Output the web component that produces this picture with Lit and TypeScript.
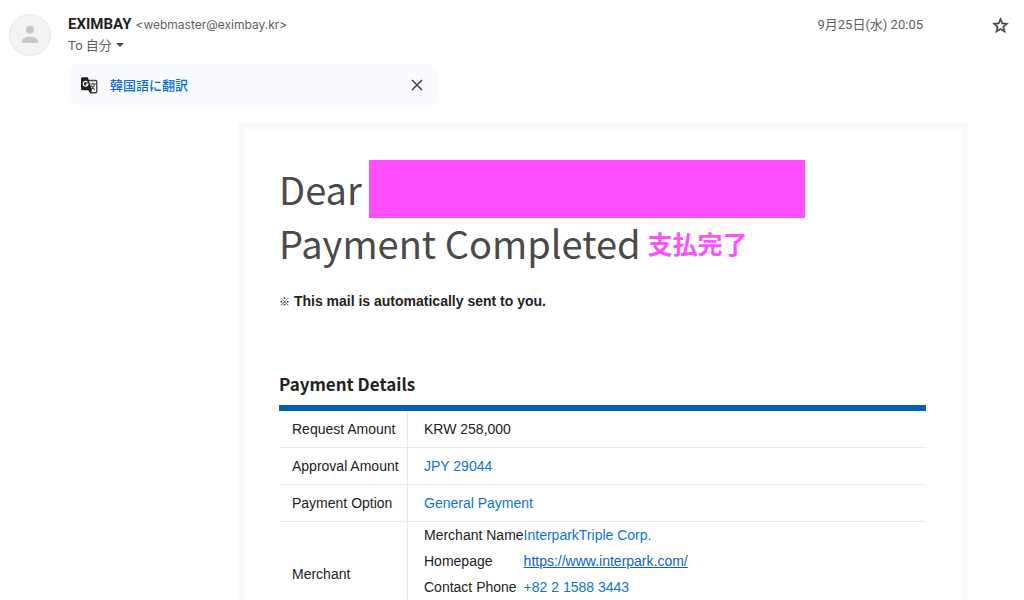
import { LitElement, html, css, svg } from "lit";
import { customElement } from "lit/decorators.js";

interface DetailRow {
  label: string;
  value: string;
  plain?: boolean;
}

const rows: DetailRow[] = [
  { label: "Request Amount", value: "KRW 258,000", plain: true },
  { label: "Approval Amount", value: "JPY 29044" },
  { label: "Payment Option", value: "General Payment" },
];

const translateIcon = svg`
  <path fill="#fff" stroke="#3c4043" stroke-width="1.6" d="M9 5.5h10a1.5 1.5 0 0 1 1.5 1.5v12a1.5 1.5 0 0 1-1.500 1.500H13z"/>
  <path fill="#1f1f1f" d="M3.200 1.500H9.600L14.800 17.500H3.200A2 2 0 0 1 1.200 15.500V3.500A2 2 0 0 1 3.200 1.500z"/>
  <path fill="#1f1f1f" d="M9.800 17.500h5L12.600 21z"/>
  <path fill="none" stroke="#fff" stroke-width="1.500" d="M9.100 7.700A2.900 2.900 0 1 0 9.700 10H7"/>
  <path fill="none" stroke="#3c4043" stroke-width="1.300" d="M12.600 9.700h6.800M15.800 8v1.700M18.200 9.700c-.4 2.300-1.900 4.100-4.200 5.600M13.800 11.500c1 2 2.500 3.800 4.600 5.300"/>`;

@customElement("app-root")
export class AppRoot extends LitElement {
  static styles = css`
    :host {
      display: block;
      height: 100vh;
      overflow: hidden;
      background: #fff;
      color: #222;
      font-family: "Liberation Sans", Arial, "Noto Sans CJK JP", sans-serif;
      font-size: 14px;
    }
    .head {
      display: flex;
      align-items: flex-start;
      padding: 14px 14px 0 9px;
      font-family: Roboto, "Noto Sans CJK JP", sans-serif;
      color: #5e5e5e;
    }
    .avatar {
      width: 42px;
      height: 42px;
      margin-right: 17px;
      flex: none;
    }
    .who {
      flex: 1;
      min-width: 0;
    }
    .line {
      display: flex;
      align-items: center;
      height: 20px;
      white-space: nowrap;
    }
    .name {
      margin: 0 4px 0 0;
      font-size: 15px;
      font-weight: 700;
      color: #1f1f1f;
    }
    .address {
      font-family: Inter, sans-serif;
      font-size: 12px;
    }
    button {
      display: flex;
      align-items: center;
      padding: 0;
      border: 0;
      background: none;
      font: inherit;
      color: inherit;
      cursor: pointer;
    }
    .to {
      gap: 4px;
      height: 20px;
      font-size: 13px;
    }
    .date {
      font-size: 13px;
      line-height: 22px;
      margin-right: 68px;
    }
    .star {
      margin-top: 2px;
    }
    .translate {
      display: flex;
      align-items: center;
      box-sizing: border-box;
      max-width: 370px;
      height: 41px;
      margin: 8px 0 0 68px;
      padding: 0 12px;
      border-radius: 8px;
      background: #f8fafe;
      font-family: "Noto Sans CJK JP", sans-serif;
    }
    .translate a {
      flex: 1;
      margin-left: 12px;
      color: #0b6bd8;
      font-size: 13px;
      line-height: 18px;
      font-weight: 500;
      text-decoration: none;
    }
    .card {
      margin: 18px 56px 0 238px;
      padding: 30px 36px 36px 35px;
      border: 6px solid #f9f9f9;
    }
    h1 {
      margin: 0;
      font-family: "Noto Sans CJK JP", sans-serif;
      font-size: 38px;
      font-weight: 400;
      line-height: 48px;
      color: #4a4a4a;
    }
    .row {
      display: flex;
      align-items: center;
      height: 48px;
      white-space: nowrap;
    }
    .row:first-child {
      height: 60px;
    }
    .mask {
      width: 436px;
      height: 58px;
      margin: 0 0 0 7px;
      background: #ff4fff;
    }
    .note {
      margin-left: 7px;
      font-size: 25px;
      font-weight: 700;
      color: #ff4fff;
    }
    .auto {
      margin: 24px 0 0;
      line-height: 20px;
      font-weight: 700;
    }
    .mark {
      font-family: "Noto Sans CJK JP", sans-serif;
      font-size: 11px;
    }
    h2 {
      margin: 60px 0 0;
      font-family: "Noto Sans CJK JP", sans-serif;
      font-size: 17px;
      font-weight: 700;
      line-height: 26px;
      color: #222;
    }
    table {
      border-collapse: collapse;
    }
    .details {
      width: 100%;
      margin-top: 8px;
      border-top: 6px solid #0061b0;
    }
    .details > tbody > tr {
      border-bottom: 1px solid #e9e9e9;
    }
    .label {
      width: 115px;
      height: 36px;
      padding: 0 0 0 13px;
      border-right: 1px solid #e9e9e9;
      font-weight: 400;
      text-align: left;
      white-space: nowrap;
    }
    .value {
      padding: 0 0 0 16px;
      color: #0a74da;
    }
    .plain {
      color: #222;
    }
    .merchant {
      padding-bottom: 26px;
    }
    .merchant th {
      width: 96px;
      padding: 0;
      color: #222;
      font-weight: 400;
      text-align: left;
      white-space: nowrap;
    }
    .merchant td {
      padding: 0;
      height: 26px;
    }
    .merchant a {
      color: #0b5fd0;
    }
  `;

  render() {
    return html`
      <header class="head">
        <svg class="avatar" viewBox="0 0 42 42" aria-hidden="true">
          <circle cx="21" cy="21" r="20.500" fill="#f3f3f3" stroke="#e6e6e6" />
          <circle cx="21" cy="15.800" r="4" fill="#c8c8c8" />
          <path fill="#c8c8c8" d="M13 29v-2c0-3 5-4.500 8-4.500s8 1.500 8 4.500v2z" />
        </svg>
        <div class="who">
          <div class="line">
            <h3 class="name">EXIMBAY</h3>
            <span class="address">&lt;webmaster@eximbay.kr&gt;</span>
          </div>
          <button class="to">
            To 自分
            <svg width="8" height="6" viewBox="0 0 8 6" aria-hidden="true"><path fill="#444" d="M0 2h8L4 6z" /></svg>
          </button>
        </div>
        <time class="date">9月25日(水) 20:05</time>
        <button class="star" aria-label="Star">
          <svg width="19" height="19" viewBox="0 0 24 24">
            <path fill="#444746" stroke="#444746" stroke-width=".6" d="M22 9.240l-7.190-.62L12 2 9.190 8.630 2 9.240l5.460 4.730L5.820 21 12 17.270 18.180 21l-1.630-7.030L22 9.240zM12 15.400l-3.760 2.270 1-4.280-3.320-2.880 4.380-.38L12 6.100l1.710 4.040 4.380.38-3.320 2.880 1 4.280L12 15.400z" />
          </svg>
        </button>
      </header>
      <div class="translate">
        <svg width="18" height="18" viewBox="0 0 22 22" aria-hidden="true">${translateIcon}</svg>
        <a href="#">韓国語に翻訳</a>
        <button aria-label="Close">
          <svg width="18" height="18" viewBox="0 0 18 18"><path stroke="#444746" stroke-width="1.600" d="M4 4l10 10M14 4L4 14" /></svg>
        </button>
      </div>
      <main class="card">
        <h1>
          <span class="row">Dear<span class="mask"></span></span>
          <span class="row">Payment Completed<span class="note">支払完了</span></span>
        </h1>
        <p class="auto"><span class="mark">※</span> This mail is automatically sent to you.</p>
        <h2>Payment Details</h2>
        <table class="details">
          <tbody>
            ${rows.map(
              (r) => html`<tr>
                <th class="label" scope="row">${r.label}</th>
                <td class="value ${r.plain ? "plain" : ""}">${r.value}</td>
              </tr>`
            )}
            <tr>
              <th class="label" scope="row">Merchant</th>
              <td class="value merchant">
                <table>
                  <tbody>
                    <tr><th scope="row">Merchant Name</th><td>InterparkTriple Corp.</td></tr>
                    <tr><th scope="row">Homepage</th><td><a href="https://www.interpark.com/">https://www.interpark.com/</a></td></tr>
                    <tr><th scope="row">Contact Phone</th><td>+82 2 1588 3443</td></tr>
                  </tbody>
                </table>
              </td>
            </tr>
          </tbody>
        </table>
      </main>
    `;
  }
}
